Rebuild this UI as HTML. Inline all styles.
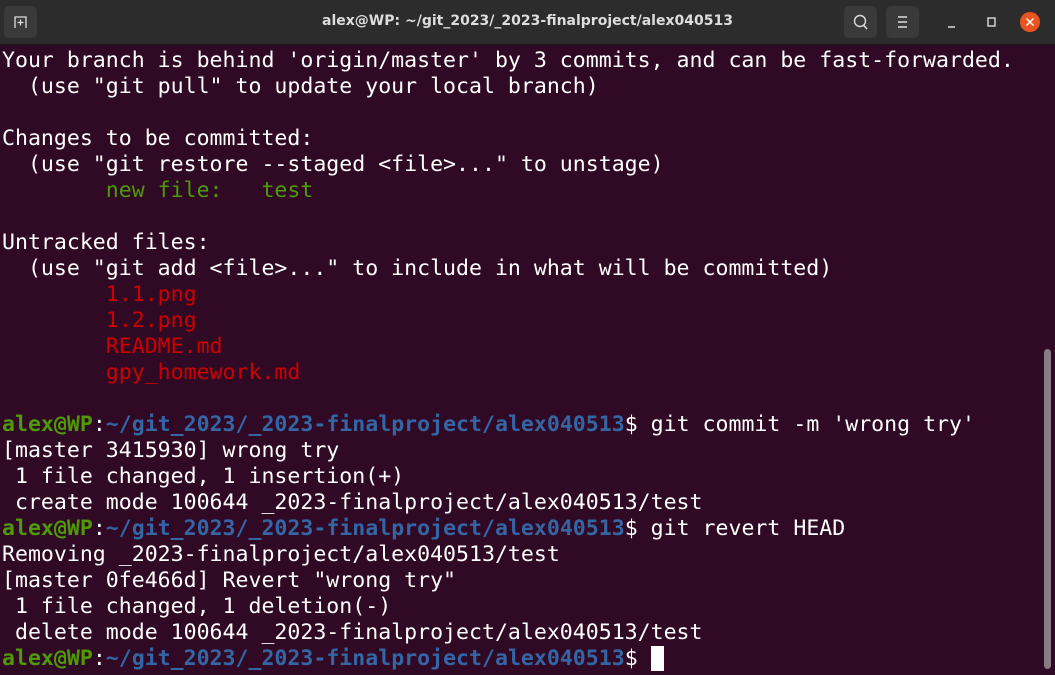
<!DOCTYPE html>
<html><head><meta charset="utf-8"><style>
body{margin:0;width:1055px;height:675px;overflow:hidden;background:#300a24;font-family:"DejaVu Sans Mono","Liberation Mono",monospace;}
#tb{position:absolute;left:0;top:0;width:1055px;height:45px;background:#2c2c2c;border-bottom:1px solid #1a1a1a;box-sizing:border-box}
#title{position:absolute;left:0;right:0;top:13px;text-align:center;color:#ddd;font:bold 14px "DejaVu Sans","Liberation Sans",sans-serif;}
.btn{position:absolute;top:6px;width:33px;height:32px;background:#3a3a3a;border-radius:5px}
pre{position:absolute;left:2px;top:48px;margin:0;font-size:21.55px;line-height:26px;color:#fff;}
.g{color:#4e9a06}.gb{color:#4e9a06;font-weight:bold}.b{color:#3465a4;font-weight:bold}.r{color:#cc0000}
#sb{position:absolute;left:1044px;top:349px;width:7px;height:320px;background:#8a7a85;border-radius:4px}
</style></head><body>
<div id="tb">
<div class="btn" style="left:4px"><svg width="33" height="32"><path d="M11 22V11h11v11M16.5 13.5v6M13.5 16.5h6" stroke="#ddd" stroke-width="1.3" fill="none"/></svg></div>
<div id="title">alex@WP: ~/git_2023/_2023-finalproject/alex040513</div>
<div class="btn" style="left:844px"><svg width="33" height="32"><circle cx="16" cy="15" r="5.5" stroke="#ddd" stroke-width="1.4" fill="none"/><path d="M19.5 19l3.5 4" stroke="#ddd" stroke-width="1.5"/></svg></div>
<div class="btn" style="left:886px"><svg width="33" height="32"><path d="M12 11h9M12 16h9M12 21h9" stroke="#ddd" stroke-width="1.4"/></svg></div>
<svg style="position:absolute;left:940px;top:10px" width="110" height="26"><path d="M8 17h7" stroke="#ddd" stroke-width="1.5"/><rect x="48" y="8" width="7" height="8" stroke="#ddd" stroke-width="1.4" fill="none"/><circle cx="90" cy="12" r="10" fill="#e95420"/><path d="M86.5 8.5l7 7M93.5 8.5l-7 7" stroke="#fff" stroke-width="1.5"/></svg>
</div>
<pre>Your branch is behind 'origin/master' by 3 commits, and can be fast-forwarded.
  (use "git pull" to update your local branch)

Changes to be committed:
  (use "git restore --staged &lt;file&gt;..." to unstage)
<span class="g">        new file:   test</span>

Untracked files:
  (use "git add &lt;file&gt;..." to include in what will be committed)
<span class="r">        1.1.png
        1.2.png
        README.md
        gpy_homework.md</span>

<span class="gb">alex@WP</span>:<span class="b">~/git_2023/_2023-finalproject/alex040513</span>$ git commit -m 'wrong try'
[master 3415930] wrong try
 1 file changed, 1 insertion(+)
 create mode 100644 _2023-finalproject/alex040513/test
<span class="gb">alex@WP</span>:<span class="b">~/git_2023/_2023-finalproject/alex040513</span>$ git revert HEAD
Removing _2023-finalproject/alex040513/test
[master 0fe466d] Revert "wrong try"
 1 file changed, 1 deletion(-)
 delete mode 100644 _2023-finalproject/alex040513/test
<span class="gb">alex@WP</span>:<span class="b">~/git_2023/_2023-finalproject/alex040513</span>$ <span style="background:#fff"> </span></pre>
<div id="sb"></div>
</body></html>
